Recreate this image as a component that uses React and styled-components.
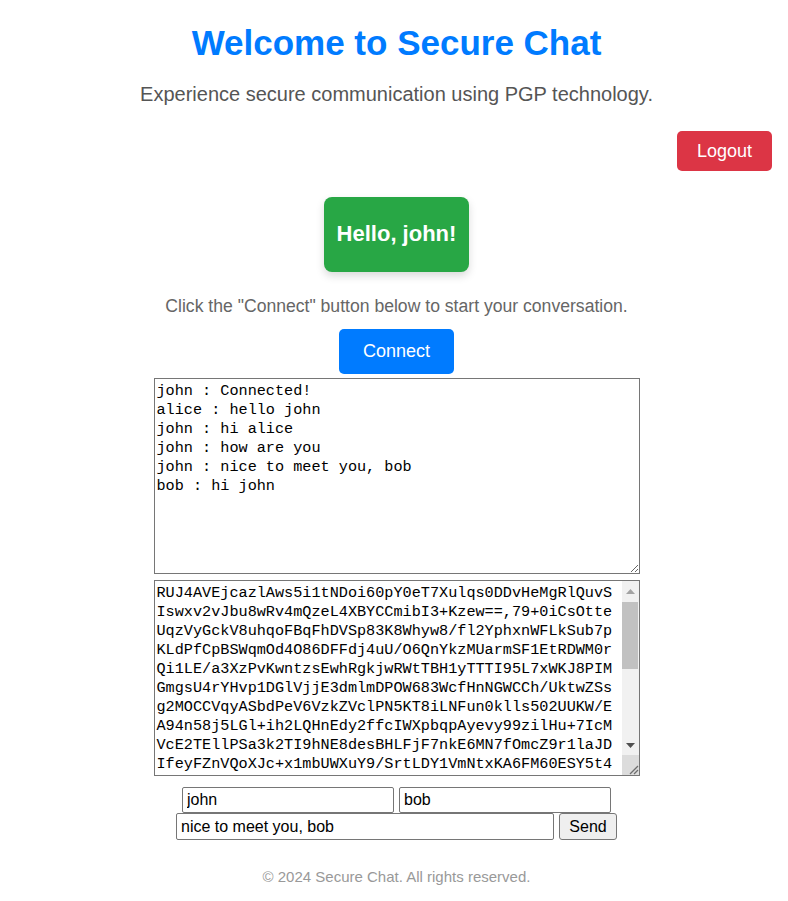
import React from "react"
import styled, { createGlobalStyle } from "styled-components"

const GlobalStyle = createGlobalStyle`
  body {
    margin: 0;
    background: #ffffff;
    font-family: "Liberation Sans", Arial, sans-serif;
  }
`

const Page = styled.div`
  display: flex;
  flex-direction: column;
  align-items: center;
  padding: 0 16px 0 21px;
`

const Title = styled.h1`
  margin: 23px 0 0;
  font-size: 35px;
  font-weight: bold;
  color: #007bff;
`

const Subtitle = styled.p`
  margin: 20px 0 0;
  font-size: 20px;
  color: #555555;
`

const TopBar = styled.div`
  align-self: stretch;
  display: flex;
  justify-content: flex-end;
  margin-top: 25px;
`

const Button = styled.button`
  box-sizing: border-box;
  border: none;
  border-radius: 5px;
  color: #ffffff;
  font-family: inherit;
  font-size: 18px;
  cursor: pointer;
  background: ${({ $variant }) => ($variant === "danger" ? "#dc3545" : "#007bff")};
  height: ${({ $variant }) => ($variant === "danger" ? "40px" : "45px")};
  padding: ${({ $variant }) => ($variant === "danger" ? "0 20px" : "0 24px")};
`

const Greeting = styled.div`
  margin-top: 26px;
  padding: 24px 13px 25px;
  background: #28a745;
  border-radius: 8px;
  box-shadow: 0 4px 8px rgba(0, 0, 0, 0.15);
`

const GreetingText = styled.h2`
  margin: 0;
  font-size: 22px;
  color: #ffffff;
`

const Hint = styled.p`
  margin: 24px 0 12px;
  font-size: 17.6px;
  color: #666666;
`

const Frame = styled.div`
  position: relative;
  width: 486px;
  margin-top: ${({ $gap }) => $gap}px;
`

const Box = styled.textarea`
  display: block;
  box-sizing: border-box;
  width: 486px;
  height: 196px;
  margin: 0;
  padding: 3px 2px 2px;
  border: 1px solid #767676;
  font-family: "Liberation Mono", "DejaVu Sans Mono", monospace;
  font-size: 15.2px;
  line-height: 19px;
  color: #000000;
  background: #ffffff;
  white-space: pre;
  overflow: hidden;
`

const Scrollbar = styled.div`
  position: absolute;
  top: 1px;
  right: 1px;
  bottom: 1px;
  width: 17px;
  display: flex;
  flex-direction: column;
  background: #f1f1f1;
`

const ArrowButton = styled.div`
  height: 20px;
  display: flex;
  align-items: center;
  justify-content: center;
  flex-shrink: 0;
`

const Track = styled.div`
  flex: 1;
  padding-top: 1px;
`

const Thumb = styled.div`
  height: 67px;
  margin: 0 1px 0 0;
  background: #c1c1c1;
`

const Corner = styled.div`
  height: 20px;
  flex-shrink: 0;
  background: #dcdcdc;
  display: flex;
  align-items: flex-end;
  justify-content: flex-end;
`

const Form = styled.div`
  margin-top: 11px;
  display: flex;
  flex-direction: column;
  align-items: center;
`

const Row = styled.div`
  display: flex;
  gap: 5px;
`

const Field = styled.input`
  box-sizing: border-box;
  width: ${({ $w }) => $w}px;
  height: ${({ $h }) => $h}px;
  padding: 1px 4px;
  border: 1px solid #767676;
  border-radius: 2px;
  font-family: inherit;
  font-size: 16px;
  color: #000000;
`

const SendButton = styled.button`
  box-sizing: border-box;
  width: 58px;
  height: 27px;
  padding: 0;
  border: 1px solid #767676;
  border-radius: 3px;
  background: #efefef;
  font-family: inherit;
  font-size: 16px;
  color: #000000;
`

const Footer = styled.footer`
  margin: 28px 0 12px;
  font-size: 15px;
  color: #999999;
`

const chatLog = [
  "john : Connected!",
  "alice : hello john",
  "john : hi alice",
  "john : how are you",
  "john : nice to meet you, bob",
  "bob : hi john",
].join("\n")

const keyData = [
  "RUJ4AVEjcazlAws5i1tNDoi60pY0eT7Xulqs0DDvHeMgRlQuvS",
  "Iswxv2vJbu8wRv4mQzeL4XBYCCmibI3+Kzew==,79+0iCsOtte",
  "UqzVyGckV8uhqoFBqFhDVSp83K8Whyw8/fl2YphxnWFLkSub7p",
  "KLdPfCpBSWqmOd4O86DFFdj4uU/O6QnYkzMUarmSF1EtRDWM0r",
  "Qi1LE/a3XzPvKwntzsEwhRgkjwRWtTBH1yTTTI95L7xWKJ8PIM",
  "GmgsU4rYHvp1DGlVjjE3dmlmDPOW683WcfHnNGWCCh/UktwZSs",
  "g2MOCCVqyASbdPeV6VzkZVclPN5KT8iLNFun0klls502UUKW/E",
  "A94n58j5LGl+ih2LQHnEdy2ffcIWXpbqpAyevy99zilHu+7IcM",
  "VcE2TEllPSa3k2TI9hNE8desBHLFjF7nkE6MN7fOmcZ9r1laJD",
  "IfeyFZnVQoXJc+x1mbUWXuY9/SrtLDY1VmNtxKA6FM60ESY5t4",
  "pQ7Wm2Rk9Xc4Tz1Vb8Nf3Hd6Jg5Ls0Ya+Ue/Io2Pq7Wr4Ts1Vx",
  "Ky8Bn3Mc6Zd9Fg2Hj5Kl1Qw4Er7Ty0Ui+Op/As3Df6Gh9Jk2Lz",
  "Xc5Vb8Nm1Qa4Ws7Ed0Rf3Tg6Yh9Uj2Ik+Ol/Pz5Xs8Dc1Fv4Gb",
  "Hn7Jm0Ky3Lu6Io9Pa2Sd5Fg8Hj1Kl4Zx+Cv/Bn7Mq0We3Rt6Yu",
  "Io9Pa2Sd5Fg8Hj1Kl4Zx7Cv0Bn3Mq6We+Rt/Yu2Io5Pa8Sd1Fg",
  "4Hj7Kl0Zx3Cv6Bn9Mq2We5Rt8Yu1Io4Pa+Sd/Fg7Hj0Kl3Zx6C",
  "v9Bn2Mq5We8Rt1Yu4Io7Pa0Sd3Fg6Hj9Kl+Zx/Cv2Bn5Mq8We1",
  "Rt4Yu7Io0Pa3Sd6Fg9Hj2Kl5Zx8Cv1Bn4Mq+We/Rt7Yu0Io3Pa",
  "6Sd9Fg2Hj5Kl8Zx1Cv4Bn7Mq0We3Rt6Yu9Io+Pa/Sd2Fg5Hj8K",
  "l1Zx4Cv7Bn0Mq3We6Rt9Yu2Io5Pa8Sd1Fg4Hj7Kl0Zx3Cv6Bn=",
].join("\n")

const Triangle = ({ up, color }) => (
  <svg width="9" height="5" viewBox="0 0 9 5">
    <polygon points={up ? "0,5 4.5,0 9,5" : "0,0 4.5,5 9,0"} fill={color} />
  </svg>
)

const Grip = () => (
  <svg width="11" height="11" viewBox="0 0 11 11">
    <line x1="10" y1="2" x2="2" y2="10" stroke="#6e6e6e" strokeWidth="1.2" />
    <line x1="10" y1="6" x2="6" y2="10" stroke="#6e6e6e" strokeWidth="1.2" />
  </svg>
)

export default function App() {
  return (
    <>
      <GlobalStyle />
      <Page>
        <Title>Welcome to Secure Chat</Title>
        <Subtitle>Experience secure communication using PGP technology.</Subtitle>
        <TopBar>
          <Button $variant="danger">Logout</Button>
        </TopBar>
        <Greeting>
          <GreetingText>Hello, john!</GreetingText>
        </Greeting>
        <Hint>Click the "Connect" button below to start your conversation.</Hint>
        <Button>Connect</Button>
        <Frame $gap={4}>
          <Box value={chatLog} readOnly />
        </Frame>
        <Frame $gap={6}>
          <Box value={keyData} readOnly />
          <Scrollbar>
            <ArrowButton>
              <Triangle up color="#a3a3a3" />
            </ArrowButton>
            <Track>
              <Thumb />
            </Track>
            <ArrowButton>
              <Triangle color="#505050" />
            </ArrowButton>
            <Corner>
              <Grip />
            </Corner>
          </Scrollbar>
        </Frame>
        <Form>
          <Row>
            <Field $w={212} $h={26} defaultValue="john" />
            <Field $w={212} $h={26} defaultValue="bob" />
          </Row>
          <Row>
            <Field $w={378} $h={27} defaultValue="nice to meet you, bob" />
            <SendButton>Send</SendButton>
          </Row>
        </Form>
        <Footer>© 2024 Secure Chat. All rights reserved.</Footer>
      </Page>
    </>
  )
}
